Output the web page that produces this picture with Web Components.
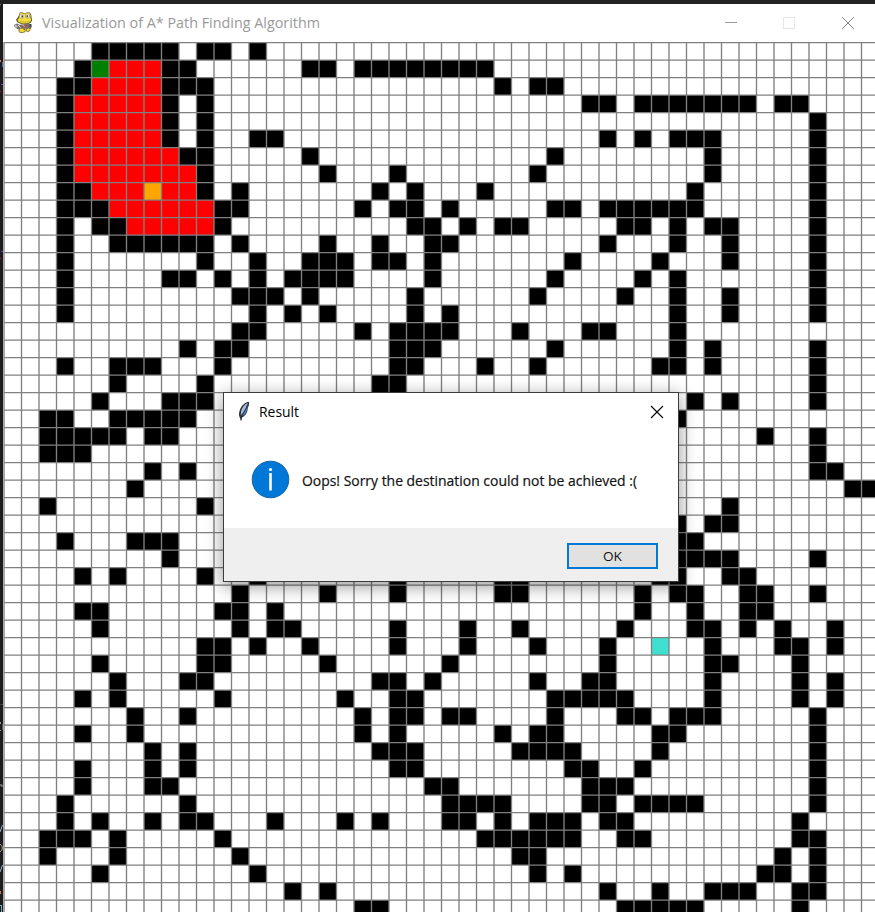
<!DOCTYPE html>
<html lang="en">
<head>
<meta charset="utf-8">
<title>Visualization of A* Path Finding Algorithm</title>
<style>
html,body{margin:0;width:875px;height:912px;overflow:hidden;background:#1e1c1f}
body{font-family:"Open Sans","Noto Sans",sans-serif}
</style>
</head>
<body>
<desk-top>
  <app-window>
    <fit-label slot="title" width="278">Visualization of A* Path Finding Algorithm</fit-label>
    <path-grid></path-grid>
  </app-window>
  <message-dialog slot="dialog">
    <fit-label slot="title" width="40">Result</fit-label>
    <fit-label slot="message" width="335">Oops! Sorry the destination could not be achieved :(</fit-label>
    <push-button slot="action"><fit-label width="19">OK</fit-label></push-button>
  </message-dialog>
</desk-top>
<script>
class Base extends HTMLElement{
  constructor(){super();this.attachShadow({mode:'open'}).innerHTML=this.markup();}
}

// Text condensed or widened so that it fills a given width.
class FitLabel extends Base{
  markup(){return `<style>:host{display:block;white-space:nowrap}span{display:inline-block;transform-origin:0 50%}</style><span><slot></slot></span>`}
  connectedCallback(){
    const s=this.shadowRoot.querySelector('span'),target=+this.getAttribute('width');
    this.style.width=target+'px';
    s.style.transform='none';
    s.style.transform=`scaleX(${target/s.getBoundingClientRect().width})`;
  }
}

class DeskTop extends Base{
  markup(){return `<style>
    :host{display:grid;grid-template-columns:3px 1fr;grid-template-rows:4px 1fr;position:relative;width:875px;height:912px;overflow:hidden;background:#1e1c1f}
    .top{grid-column:1/3;background:#222;display:block}
    ::slotted(app-window){min-width:0}
    ::slotted(message-dialog){position:absolute;left:223px;top:392px}
    svg{display:block}
  </style>
  <div class="top"></div>
  <svg width="3" height="908" viewBox="0 4 3 908">
    <path d="M0 4h1l-1 2z" fill="#888"/>
    <path d="M0 60h1v2h-1z" fill="#d98b4a"/><path d="M2 62h1v5h-1z" fill="#3e6f9c"/>
    <path d="M1 84h2v1h-2zM1 251h2v1h-2z" fill="#67529a"/><path d="M0 91h1v1h-1zM0 258h1v1h-1z" fill="#a22"/>
    <path d="M0 704h3v1h-3z" fill="#444"/><path d="M0 722h1v2h-1zM0 730h1v1h-1z" fill="#999"/><path d="M2 724h1v6h-1z" fill="#555"/>
    <path d="M0 785h2v2" fill="none" stroke="#aaa"/>
    <path d="M2.500 825l-2.500 7M2.500 865l-2.500 7" stroke="#9ab4c4" fill="none"/>
    <path d="M0 844.500c3 0 3 7 0 7" stroke="#b0a890" fill="none"/>
    <path d="M0 891h1v3h-1z" fill="#c87f3f"/><path d="M0 905h2v7h-1v-6h-1z" fill="#7ab"/>
  </svg>
  <slot></slot><slot name="dialog"></slot>`}
}

class AppWindow extends Base{
  markup(){return `<style>
    :host{display:flex;flex-direction:column;background:#fff}
    header{height:38px;display:flex;align-items:center;padding-left:10px;box-sizing:border-box;color:#999;font-size:15px;background:#fff}
    ::slotted(fit-label){margin-left:8px;line-height:36px;height:38px}
    .ctl{margin-left:auto;display:flex;width:174px}
    .ctl svg{flex:none;width:58px;height:38px;display:block}
  </style>
  <header><snake-icon></snake-icon><slot name="title"></slot>
    <div class="ctl">
      <svg viewBox="0 0 58 38"><path d="M24 18.500h12" stroke="#999"/></svg>
      <svg viewBox="0 0 58 38"><rect x="24.500" y="13.500" width="11" height="11" fill="none" stroke="#e6e6e6"/></svg>
      <svg viewBox="0 0 58 38"><path d="M25 13l12 12M37 13L25 25" stroke="#888" fill="none"/></svg>
    </div>
  </header><slot></slot>`}
}

class SnakeIcon extends Base{
  markup(){return `<style>:host{display:block;width:21px;height:22px}svg{display:block}</style>
  <svg width="21" height="22" viewBox="13 11.500 21 22">
    <path d="M19 14.500l.8-2.500h3l2 1 2-1h3l1.400 2 .3 3 .7 2.500-1.700 3-3 1.300h-6l-4-2-1.500-2.500 2-2.500z" fill="#4e4818"/>
    <path d="M19.500 14.800l.8-2.300h2.200l2 1 2-1h2.700l1.500 2-.3 2.500 1 2-1.500 2.700-3 1.200h-5l-3.500-1.700-1-2 1.800-2z" fill="#f5de3c"/>
    <ellipse cx="21.300" cy="15.800" rx="1.900" ry="2.600" fill="#e8e8ea" stroke="#8d8430" stroke-width=".5"/><ellipse cx="27.600" cy="15.500" rx="2.100" ry="2.600" fill="#e8e8ea" stroke="#8d8430" stroke-width=".5"/>
    <path d="M21.500 15h1.500v2h-1.500zM26.500 14.700H28v2h-1.500z" fill="#444"/>
    <path d="M20 20.800c3 1.200 6.500 1.200 9.500 0" stroke="#c9b028" fill="none"/>
    <path d="M14 24.500l3-1.500 3 1.500 3-.5 4-1 4 1 .5 3-3 2.500-3-.5-3 1-5-1.500-3-2z" fill="#77716e"/>
    <path d="M14 25.500l2-1.500 2 2-2 1.500z" fill="#bbb"/><path d="M18 24.500l3.500 3.500M22.500 24.500l3.500 3.500" stroke="#ddd"/>
    <path d="M20.500 24.500l3 2M27 24.500l-2.500 3" stroke="#a8544a" stroke-width="1.300"/>
    <path d="M18.800 29.500l1.500-2 2.500.3 2.500 2-.3 1.500-3 .9-2.500-.5zM26 29l2-1.500 2.500.5-1 2.500-2.500.8z" fill="#f3da34" stroke="#5c5420" stroke-width=".7"/>
    <path d="M29.500 23.500h2v3h-2z" fill="#444"/>
  </svg>`}
}

// 50 x 50 board. Each row lists its walls as columns or column ranges.
const WALLS=`5-9 11-12 14
4 9-10 17-18 20-27
3-4 9-11 28 30-31
3 9 11 33-34 36-42 44-45
3 9 11 46
3 9 11 14-15 34 36 38-40 46
3 10-11 17 31 40 46
3 11 18 22 30 40 46
3-4 11 13 21 23 27 39 46
3-5 12-13 20 22-23 25 31-32 34-39 46
3 5-6 12 23-24 26 28-29 35-36 38 40-41 46
3 6-11 13 18 21 24-25 34 38 41 46
3 11 14 17-19 21-22 24 32 37 41 46
3 9-10 12 14 16-19 24 31 36 38 46
3 13-15 17 23 30 35 38 41 46
3 14 16 18 23 25 38 41 46
13-14 20 22-25 29 33-34 38
10 12-13 22-24 31 38 40 46
3 6-8 12 22-23 27 30 37-38 40 46
6 11 21-22 46
5 9-11 39 41 46
2-3 6-10 38
2-6 8-9 43 46
2-4 46
8 10 46-47
7 48-49
2 11 41
38 40-41
3 7-9 38-39
9 38-41 46
4 6 11 14 22 28-29 37-38 41-42
13 18 22 28-29 36 38-39 42-43 46
4-5 12-13 15 36 39 42-43
5 13 15-16 22 26 29 35 39-40 42 44 47
11-12 14 17 22 26 30 34 40 44-45 47
5 11-12 18 25 34 40-41 45
6 10-11 21-22 24 30 33-34 40 45 47
4 6 12 19 22-23 31-35 40 45 47
7 10 20 22-23 25-26 31 35-36 38-40 46
4 7 20 22 28 30-31 37-38 46
8 10 21-23 29-32 37 46
4 8 10 22-23 32-33 36 46
4 8-9 24-25 33-35 46
3 10 25-28 33-34 36-39 46
3 5 8 10-11 15 19 21 25-26 28 30-32 34-35 45
2-4 6 12 27-32 35-36 45-46
2 6 13 29-30 44 46
5 14 30 32 43-44 46
16 18 34 37 40-42 45-46
20-21 35-39 45`.split('\n');
const CLOSED={1:'6-8',2:'5-8',3:'4-8',4:'4-8',5:'4-8',6:'4-9',7:'4-10',8:'5-10',9:'6-11',10:'7-11'};
const PITCH=17.5,X0=.5,Y0=0;

class PathGrid extends Base{
  markup(){
    const cells=(spec,row)=>spec.split(' ').map(p=>{
      const [a,b=a]=p.split('-').map(Number);
      return `M${X0+.5+a*PITCH} ${Y0+.5+row*PITCH}h${(b-a+1)*PITCH}v${PITCH}h-${(b-a+1)*PITCH}z`}).join('');
    const walls=WALLS.map(cells).join('');
    const closed=Object.entries(CLOSED).map(([r,s])=>cells(s,+r)).join('');
    let lines='';
    for(let i=0;i<=50;i++){
      const x=X0+.5+i*PITCH,y=Y0+.6+i*PITCH;
      lines+=`M${x} 0V870M${X0} ${y}H872`;
    }
    return `<style>:host{display:block;width:872px;height:870px}svg{display:block}</style>
    <svg width="872" height="870" viewBox="0 0 872 870">
      <path d="${walls}" fill="#000"/><path d="${closed}" fill="#f00"/>
      <path d="${cells('5',1)}" fill="#008000"/><path d="${cells('8',8)}" fill="#ffa500"/><path d="${cells('37',34)}" fill="#40e0d0"/>
      <path d="${lines}" stroke="#808080" stroke-width="1.350" fill="none"/>
    </svg>`}
}

class MessageDialog extends Base{
  markup(){return `<style>
    :host{display:flex;flex-direction:column;box-sizing:border-box;width:456px;height:190px;border:1px solid #3c3c3c;background:#fff;box-shadow:0 4px 16px 1px rgba(0,0,0,.38);color:#000}
    header{display:flex;align-items:center;height:38px;padding:0 14px 0 12px;font-size:15px}
    header svg{display:block;flex:none}
    header .x{margin-left:auto}
    slot[name=title]::slotted(*){margin-left:8px;margin-top:-2px}
    main{flex:1;display:flex;align-items:center;padding:2px 0 0 27px;font-size:13.800px}
    main svg{display:block;flex:none;margin-top:-2px}
    slot[name=message]::slotted(*){margin-left:12px;margin-top:-1px;color:#111;-webkit-text-stroke:.2px #111}
    footer{height:53px;background:#efefef;display:flex;justify-content:flex-end;align-items:center;padding-right:20px;box-sizing:border-box;padding-top:2px}
  </style>
  <header>
    <svg width="15" height="22" viewBox="236 400 15 22">
      <path d="M248.800 400.800c-3.500.4-7 3.700-8.800 7.700-1.300 3.200-1.400 6.500 0 8.500l.6 2.500h1l.4-3c2.500-1 4.500-3.200 5.300-6.200.5-2 .2-2.800.9-4.300.9-1.600 1-3.700.6-5.200z" fill="#2a3038"/>
      <path d="M248 402c-3.300 1-5.700 4-6.900 8l-.4 4.500c2.600-2.500 4.800-6.500 6.300-10.500z" fill="#a9bcd2"/>
      <path d="M248.200 402.800c-1 4.200-3.700 8.700-6.500 12.400 2.800-.8 4.500-3.200 5.100-6.200z" fill="#4f86cc"/>
      <path d="M247 404.500c-1.500 4-3.500 7.500-5.600 12.500" stroke="#28405e" stroke-width=".5" fill="none"/>
    </svg>
    <slot name="title"></slot>
    <svg class="x" width="14" height="14" viewBox="0 0 14 14"><path d="M1 1l12 12M13 1L1 13" stroke="#000" stroke-width="1.100"/></svg>
  </header>
  <main>
    <svg width="39" height="39" viewBox="0 0 39 39"><circle cx="19.500" cy="19.500" r="18.300" fill="#0078d7" stroke="#1063a8" stroke-width="1"/><circle cx="19.500" cy="9.500" r="1.600" fill="#fff"/><path d="M19.500 13v17.500" stroke="#fff" stroke-width="2.600"/></svg>
    <slot name="message"></slot>
  </main>
  <footer><slot name="action"></slot></footer>`}
}

class PushButton extends Base{
  markup(){return `<style>:host{display:flex;align-items:center;justify-content:center;box-sizing:border-box;width:91px;height:26px;border:2px solid #0078d7;background:#e1e1e1;font-size:13.500px;color:#111}</style><slot></slot>`}
}

customElements.define('snake-icon',SnakeIcon);
customElements.define('path-grid',PathGrid);
customElements.define('push-button',PushButton);
customElements.define('message-dialog',MessageDialog);
customElements.define('app-window',AppWindow);
customElements.define('desk-top',DeskTop);
// Labels measure themselves, so the hosts around them are defined first.
customElements.define('fit-label',FitLabel);
</script>
</body>
</html>
